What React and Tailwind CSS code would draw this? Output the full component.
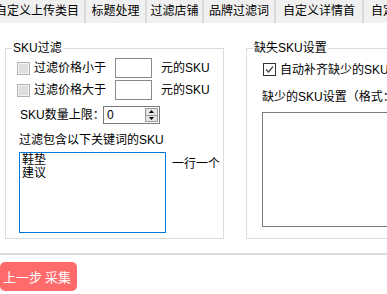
const tabs = [
  { label: '自定义上传类目', w: 'w-[96px]' },
  { label: '标题处理', w: 'w-[61px]' },
  { label: '过滤店铺', w: 'w-[57px]' },
  { label: '品牌过滤词', w: 'w-[72px]' },
  { label: '自定义详情首', w: 'w-[88px]' },
  { label: '自定义详情尾', w: 'w-[88px]' },
];

function GrayBox() {
  return <span className="block w-[13px] h-[13px] shrink-0 border border-[#b4b4b4] bg-[#dedede] shadow-[inset_0_0_0_1px_#f2f2f2]" />;
}

function CheckedBox() {
  return (
    <span className="flex items-center justify-center w-[13px] h-[13px] shrink-0 border border-[#333] bg-white">
      <svg width="9" height="9" viewBox="0 0 9 9">
        <path d="M1 4.5 L3.5 7 L8 1.5" fill="none" stroke="#444" strokeWidth="1.2" />
      </svg>
    </span>
  );
}

export default function App() {
  return (
    <div className="w-[387px] h-[294px] overflow-hidden bg-white text-black text-[12px] leading-[12px]" style={{ fontFamily: '"Liberation Sans", "Noto Sans CJK SC", sans-serif' }}>
      {/* Tabs */}
      <div className="flex h-[23px] ml-[-10px] whitespace-nowrap">
        {tabs.map((t) => (
          <div key={t.label} className={`${t.w} shrink-0 h-[23px] leading-[23px] text-center bg-[#f0f0f0] border-r-2 border-[#dadada] overflow-hidden`}>
            {t.label}
          </div>
        ))}
      </div>

      <div className="flex mt-[19px] whitespace-nowrap">
        {/* SKU过滤 */}
        <fieldset className="ml-[5px] w-[219px] h-[197px] shrink-0 border border-[#dcdcdc] pt-[4px]">
          <legend className="ml-[6px] px-[1px] leading-[12px]">SKU过滤</legend>
          <div className="flex items-center h-[20px]">
            <span className="ml-[11px]"><GrayBox /></span>
            <span className="ml-[4px] w-[72px]">过滤价格小于</span>
            <span className="ml-[9px] w-[37px] h-[20px] border border-[#8a8a8a]" />
            <span className="ml-[9px]">元的SKU</span>
          </div>
          <div className="flex items-center h-[20px] mt-[2px]">
            <span className="ml-[11px]"><GrayBox /></span>
            <span className="ml-[4px] w-[72px]">过滤价格大于</span>
            <span className="ml-[9px] w-[37px] h-[20px] border border-[#8a8a8a]" />
            <span className="ml-[9px]">元的SKU</span>
          </div>
          <div className="flex items-center h-[18px] mt-[6px]">
            <span className="ml-[14px] w-[83px]">SKU数量上限：</span>
            <div className="flex items-center justify-between w-[57px] h-[18px] border border-[#7a7a7a] pl-[3px] pr-[1px]">
              <span>0</span>
              <div className="flex flex-col w-[13px] h-[14px] border border-[#9a9a9a] bg-[#e6e6e6]">
                <div className="flex-1 flex items-center justify-center border-b border-[#9a9a9a]">
                  <svg width="5" height="3" viewBox="0 0 5 3"><path d="M2.5 0 L5 3 L0 3 Z" fill="#000" /></svg>
                </div>
                <div className="flex-1 flex items-center justify-center">
                  <svg width="5" height="3" viewBox="0 0 5 3"><path d="M0 0 L5 0 L2.5 3 Z" fill="#000" /></svg>
                </div>
              </div>
            </div>
          </div>
          <div className="ml-[13px] mt-[10px]">过滤包含以下关键词的SKU</div>
          <div className="flex mt-[6px]">
            <div className="ml-[13px] w-[147px] h-[81px] border border-[#0078d7] pl-[2px] pt-[1px] leading-[13px]">
              <div>鞋垫</div>
              <div>建议</div>
            </div>
            <span className="ml-[6px] mt-[6px]">一行一个</span>
          </div>
        </fieldset>

        {/* 缺失SKU设置 */}
        <fieldset className="ml-[22px] w-[170px] h-[197px] shrink-0 border border-[#dcdcdc]">
          <legend className="ml-[6px] px-[1px] leading-[12px]">缺失SKU设置</legend>
          <div className="flex items-center h-[13px] mt-[9px]">
            <span className="ml-[16px]"><CheckedBox /></span>
            <span className="ml-[4px]">自动补齐缺少的SKU</span>
          </div>
          <div className="ml-[15px] mt-[15px]">缺少的SKU设置（格式：</div>
          <div className="ml-[15px] mt-[9px] w-[160px] h-[115px] border border-[#7a7a7a]" />
        </fieldset>
      </div>

      <div className="mt-[14px] border-t-2 border-[#dcdcdc]" />

      <button className="mt-[7px] h-[29px] w-[77px] rounded-[5px] bg-[#ff6b6b] text-white text-[13px] leading-[13px] pl-[3px] text-left" style={{ fontFamily: '"Noto Sans CJK SC", sans-serif' }}>
        上一步&nbsp;采集
      </button>
    </div>
  );
}
